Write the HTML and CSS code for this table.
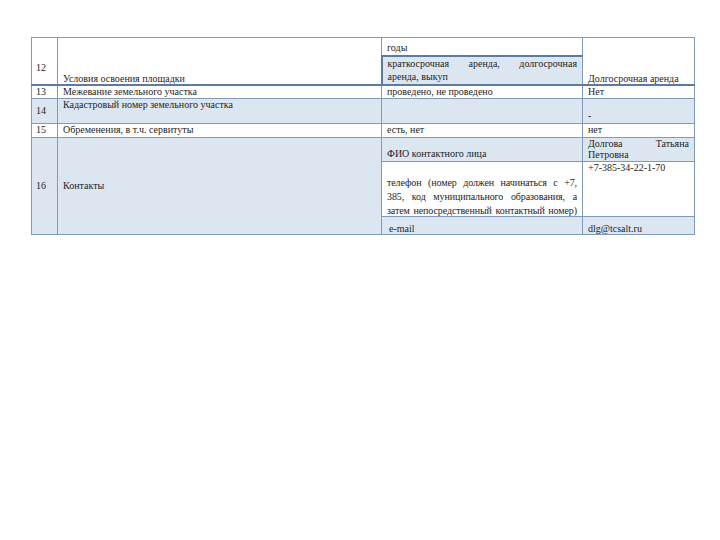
FILE: index.html
```html
<!DOCTYPE html>
<html lang="ru">
<head>
<meta charset="utf-8">
<title>Таблица</title>
<link rel="stylesheet" href="styles.css">
</head>
<body>
<table class="sheet">
  <colgroup>
    <col class="c-num">
    <col class="c-label">
    <col class="c-mid">
    <col class="c-right">
  </colgroup>
  <tr class="r12a">
    <td class="num num12 thick-b" rowspan="2">12</td>
    <td class="bottom low thick-b" rowspan="2">Условия освоения площадки</td>
    <td class="bottom">годы</td>
    <td class="bottom low thick-b" rowspan="2">Долгосрочная аренда</td>
  </tr>
  <tr class="r12b">
    <td class="box thick-b">
      <div class="just">краткосрочная аренда, долгосрочная</div>
      <div>аренда, выкуп</div>
    </td>
  </tr>
  <tr class="r13">
    <td class="num">13</td>
    <td>Межевание земельного участка</td>
    <td>проведено, не проведено</td>
    <td>Нет</td>
  </tr>
  <tr class="r14 shade">
    <td class="num">14</td>
    <td class="top">Кадастровый номер земельного участка</td>
    <td></td>
    <td class="bottom">-</td>
  </tr>
  <tr class="r15">
    <td class="num">15</td>
    <td>Обременения, в т.ч. сервитуты</td>
    <td>есть, нет</td>
    <td>нет</td>
  </tr>
  <tr class="r16a">
    <td class="num shade" rowspan="3">16</td>
    <td class="shade" rowspan="3">Контакты</td>
    <td class="shade bottom">ФИО контактного лица</td>
    <td class="shade top just-all name">Долгова Татьяна Петровна</td>
  </tr>
  <tr class="r16b">
    <td class="bottom just-all phone"><div class="phone-text">телефон (номер должен начинаться с +7,<br>385, код муниципального образования, а<br>затем непосредственный контактный номер)</div></td>
    <td class="top">+7-385-34-22-1-70</td>
  </tr>
  <tr class="r16c">
    <td class="shade bottom low email">e-mail</td>
    <td class="shade bottom low">dlg@tcsalt.ru</td>
  </tr>
</table>
</body>
</html>
```
FILE: styles.css
```css
body {
  margin: 0;
  background: #ffffff;
  font-family: "Liberation Serif", "DejaVu Serif", serif;
  font-size: 10px;
  color: #1e1e1e;
}

.sheet {
  margin: 37px 0 0 31px;
  border-collapse: collapse;
  table-layout: fixed;
  width: 663px;
}

.c-num { width: 26px; }
.c-label { width: 324px; }
.c-mid { width: 201px; }
.c-right { width: 112px; }

.sheet td {
  border: 1px solid #8199bb;
  padding: 0 5px;
  line-height: 12px;
  vertical-align: middle;
  white-space: nowrap;
  overflow: hidden;
}

.sheet td.num {
  padding: 0 4px;
}

.sheet td.num12 {
  padding-top: 14px;
}

.sheet td.top { vertical-align: top; }
.sheet td.bottom { vertical-align: bottom; padding-bottom: 1px; }

.sheet td.low {
  line-height: 8px;
  padding-bottom: 1px;
}

.r12a { height: 18px; }
.r12b { height: 29px; }
.r13 { height: 13px; }
.r14 { height: 25px; }
.r15 { height: 14px; }
.r16a { height: 24px; }
.r16b { height: 55px; }
.r16c { height: 18px; }

.shade,
.sheet td.shade {
  background: #dce6f1;
}

.sheet td.thick-b {
  border-bottom: 2px solid #5b7ba4;
}

.sheet td.box {
  background: #dce6f1;
  border-left: 2px solid #5b7ba4;
  border-top: 2px solid #5b7ba4;
  line-height: 13px;
}

.just {
  text-align: justify;
  text-align-last: justify;
}

.sheet td.just-all {
  white-space: normal;
  text-align: justify;
  text-align-last: justify;
}

.sheet td.name {
  line-height: 11px;
}

.sheet td.phone {
  line-height: 14px;
  white-space: nowrap;
  letter-spacing: -0.1px;
  padding-bottom: 0;
}

.phone-text {
  margin-bottom: -2px;
}

.sheet td.email {
  padding-left: 7px;
}
```
